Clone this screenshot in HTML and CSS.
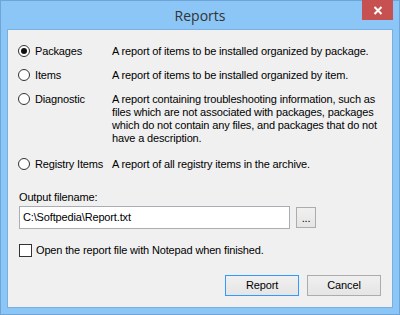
FILE: index.html
```html
<!DOCTYPE html>
<html>
<head>
<meta charset="utf-8">
<link rel="stylesheet" href="styles.css">
</head>
<body>
<div class="window">
  <div class="titlebar">
    <span></span>
    <span class="title">Reports</span>
    <span class="close"><svg width="10" height="9" viewBox="0 0 10 9"><path d="M1.5 1 L8.5 8 M8.5 1 L1.5 8" stroke="#fff" stroke-width="2"/></svg></span>
  </div>
  <div class="client">
    <div class="options">
      <div class="opt"><span class="radio checked"></span>Packages</div>
      <div class="desc">A report of items to be installed organized by package.</div>
      <div class="opt"><span class="radio"></span>Items</div>
      <div class="desc">A report of items to be installed organized by item.</div>
      <div class="opt"><span class="radio"></span>Diagnostic</div>
      <div class="desc">A report containing troubleshooting information, such as<br>files which are not associated with packages, packages<br>which do not contain any files, and packages that do not<br>have a description.</div>
      <div class="opt last"><span class="radio"></span>Registry Items</div>
      <div class="desc last">A report of all registry items in the archive.</div>
    </div>
    <div class="label">Output filename:</div>
    <div class="filerow">
      <div class="input">C:\Softpedia\Report.txt</div>
      <div class="browse">...</div>
    </div>
    <div class="checkrow"><span class="check"></span>Open the report file with Notepad when finished.</div>
    <div class="buttons">
      <div class="btn default">Report</div>
      <div class="btn">Cancel</div>
    </div>
  </div>
</div>
</body>
</html>
```
FILE: styles.css
```css
html, body {
  margin: 0;
  padding: 0;
  background: #8cc6f6;
}
.window {
  width: 400px;
  height: 315px;
  box-sizing: border-box;
  border: 1px solid #6ea4d8;
  background: #8cc6f6;
  padding: 0 6px 6px 6px;
  display: flex;
  flex-direction: column;
  font-family: "Liberation Sans", Arial, sans-serif;
  font-size: 11px;
  letter-spacing: -0.15px;
  color: #000;
}
.titlebar {
  height: 28px;
  display: grid;
  grid-template-columns: 1fr auto 1fr;
  align-items: start;
}
.title {
  font-family: "Open Sans", "Noto Sans", sans-serif;
  font-size: 14px;
  letter-spacing: 0;
  color: #333;
  line-height: 29px;
}
.close {
  justify-self: end;
  width: 31px;
  height: 20px;
  margin-top: -1px;
  background: #c75050;
  display: flex;
  align-items: center;
  justify-content: center;
}
.client {
  flex: 1;
  border: 1px solid #78b0e2;
  background: #f0f0f0;
  display: flex;
  flex-direction: column;
  padding: 15px 10px 0 10px;
}
.options {
  display: grid;
  grid-template-columns: 94px 1fr;
  row-gap: 11px;
  line-height: 13px;
}
.opt {
  display: flex;
  align-items: flex-start;
  gap: 5px;
  white-space: nowrap;
}
.opt.last, .desc.last { margin-top: 2px; }
.radio {
  width: 10px;
  height: 10px;
  border: 1px solid #333;
  border-radius: 50%;
  background: #fff;
  display: flex;
  align-items: center;
  justify-content: center;
  flex: none;
}
.radio.checked::after {
  content: "";
  width: 6px;
  height: 6px;
  border-radius: 50%;
  background: #111;
}
.desc { white-space: nowrap; }
.label {
  margin-top: 20px;
  margin-left: 1px;
  line-height: 13px;
}
.filerow {
  display: flex;
  align-items: center;
  gap: 6px;
  margin-top: 2px;
  margin-left: 1px;
}
.input {
  width: 263px;
  height: 21px;
  border: 1px solid #abadb3;
  background: #fff;
  padding: 0 3px;
  line-height: 21px;
}
.browse {
  width: 18px;
  height: 19px;
  border: 1px solid #acacac;
  background: linear-gradient(#f0f0f0, #e5e5e5);
  text-align: center;
  line-height: 21px;
}
.checkrow {
  margin-top: 15px;
  margin-left: 1px;
  display: flex;
  align-items: center;
  gap: 4px;
  line-height: 13px;
}
.check {
  width: 11px;
  height: 11px;
  border: 1px solid #333;
  background: #fff;
  flex: none;
}
.buttons {
  display: flex;
  justify-content: flex-end;
  gap: 8px;
  margin-top: 18px;
  padding-right: 1px;
}
.btn {
  width: 72px;
  height: 19px;
  border: 1px solid #acacac;
  background: linear-gradient(#f0f0f0, #e5e5e5);
  text-align: center;
  line-height: 19px;
}
.btn.default {
  border-color: #3399ff;
}
```
